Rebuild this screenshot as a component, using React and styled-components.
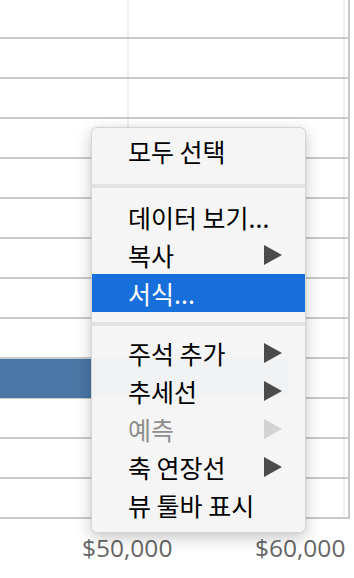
import React from "react";
import styled, { createGlobalStyle } from "styled-components";

const Global = createGlobalStyle`
  html, body { margin: 0; padding: 0; background: #ffffff; }
  body { width: 354px; height: 578px; overflow: hidden; }
`;

const Page = styled.div`
  position: relative;
  width: 354px;
  height: 578px;
  display: flex;
  flex-direction: column;
  background: #ffffff;
`;

const Chart = styled.svg`
  display: block;
  flex: 0 0 auto;
`;

const AxisRow = styled.div`
  display: flex;
  padding-left: 82px;
  margin-top: 15px;
`;

const AxisLabel = styled.div`
  flex: 0 0 ${(p) => p.$w || "auto"};
  font-family: "Open Sans", "Noto Sans", sans-serif;
  font-size: 24.5px;
  line-height: 28px;
  color: #676767;
  white-space: nowrap;
`;

const Menu = styled.div`
  position: absolute;
  left: 91px;
  top: 127px;
  width: 215px;
  box-sizing: border-box;
  padding: 4px 0 8px;
  background: rgba(245, 245, 245, 0.98);
  border: 1px solid rgba(0, 0, 0, 0.13);
  border-radius: 6px;
  box-shadow: 0 5px 16px rgba(0, 0, 0, 0.22), 0 0 2px rgba(0, 0, 0, 0.1);
  font-family: "Noto Sans CJK KR", "Noto Sans", sans-serif;
`;

const Item = styled.div`
  display: flex;
  align-items: center;
  justify-content: space-between;
  height: ${(p) => p.$h || 38}px;
  padding: 0 23px 0 36px;
  font-size: 25px;
  font-weight: 400;
  line-height: 1;
  color: ${(p) => (p.$active ? "#ffffff" : p.$disabled ? "#8d8d8d" : "#000000")};
  background: ${(p) => (p.$active ? "#176fdb" : "transparent")};
  white-space: nowrap;
`;

const Separator = styled.div`
  height: 4px;
  background: #e2e2e2;
  margin: ${(p) => p.$top}px 0 ${(p) => p.$bottom}px;
`;

const Arrow = ({ disabled }) => (
  <svg width="18" height="20" viewBox="0 0 18 20">
    <polygon points="0,0 18,10 0,20" fill={disabled ? "#d3d3d3" : "#4b4b4b"} />
  </svg>
);

const rows = Array.from({ length: 13 }, (_, i) => 37 + i * 40);

export default function App() {
  return (
    <Page>
      <Global />
      <Chart width="354" height="519" viewBox="0 0 354 519">
        <rect x="127" y="0" width="2" height="519" fill="#efefef" />
        <rect x="343" y="0" width="2" height="519" fill="#f0f0f0" />
        {rows.map((y) => (
          <rect key={y} x="0" y={y} width="348" height="2" fill="#c9c9c9" />
        ))}
        <rect x="0" y="359" width="288" height="39" fill="#4b77a6" />
        <rect x="348" y="0" width="2" height="519" fill="#c8c8c8" />
      </Chart>
      <AxisRow>
        <AxisLabel $w="173px">$50,000</AxisLabel>
        <AxisLabel>$60,000</AxisLabel>
      </AxisRow>
      <Menu>
        <Item>모두 선택</Item>
        <Separator $top={14} $bottom={10} />
        <Item>데이터 보기...</Item>
        <Item>
          복사
          <Arrow />
        </Item>
        <Item $active>서식...</Item>
        <Separator $top={10} $bottom={8} />
        <Item>
          주석 추가
          <Arrow />
        </Item>
        <Item>
          추세선
          <Arrow />
        </Item>
        <Item $disabled>
          예측
          <Arrow disabled />
        </Item>
        <Item>
          축 연장선
          <Arrow />
        </Item>
        <Item>뷰 툴바 표시</Item>
      </Menu>
    </Page>
  );
}
